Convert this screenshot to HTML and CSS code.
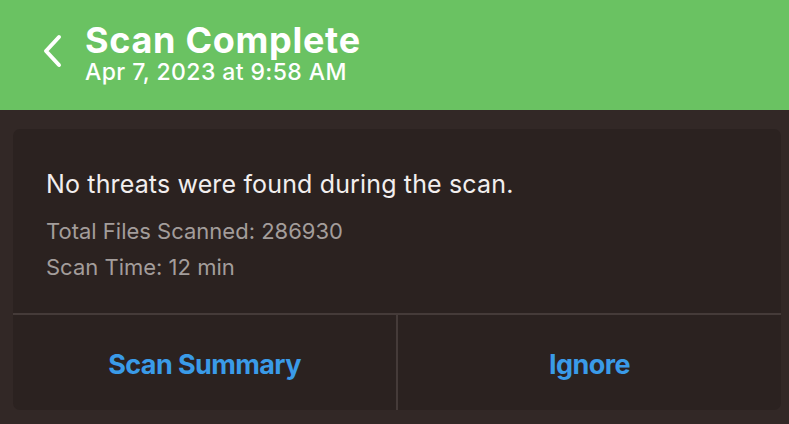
FILE: index.html
```html
<!DOCTYPE html>
<html lang="en">
<head>
  <meta charset="UTF-8">
  <meta name="viewport" content="width=device-width, initial-scale=1.0">
  <title>Scan Complete</title>
  <link rel="stylesheet" href="styles.css">
</head>
<body>
  <div id="header">
    <button id="back" aria-label="Back">
      <svg width="22" height="34" viewBox="0 0 22 34">
        <path d="M17 3 L4 17 L17 31" fill="none" stroke="#fff" stroke-width="4" stroke-linecap="round" stroke-linejoin="round"/>
      </svg>
    </button>
    <div class="titles">
      <div class="title">Scan Complete</div>
      <div class="subtitle">Apr 7, 2023 at 9:58 AM</div>
    </div>
  </div>

  <div id="card">
    <div class="info">
      <div class="message">No threats were found during the scan.</div>
      <div class="detail first">Total Files Scanned: 286930</div>
      <div class="detail">Scan Time: 12 min</div>
    </div>
    <div class="actions">
      <button class="action">Scan Summary</button>
      <button class="action">Ignore</button>
    </div>
  </div>
</body>
</html>
```

FILE: styles.css
```css
body {
  margin: 0;
  background-color: #322826;
  color: #fff;
  font-family: Inter, "Liberation Sans", sans-serif;
}
#header {
  height: 110px;
  background-color: #6ac262;
  display: flex;
  align-items: flex-start;
  box-sizing: border-box;
  padding: 21px 0 0 41px;
}
#back {
  background: none;
  border: none;
  padding: 0;
  margin-top: 13px;
  width: 24px;
  cursor: pointer;
}
.titles {
  margin-left: 20px;
}
.title {
  font-size: 36px;
  font-weight: 700;
  line-height: 38px;
  letter-spacing: 0.7px;
}
.subtitle {
  font-size: 23px;
  font-weight: 500;
  line-height: 26px;
  letter-spacing: 0.4px;
}
#card {
  margin: 19px 8px 0 13px;
  background-color: #2b2220;
  border-radius: 7px;
  overflow: hidden;
}
.info {
  box-sizing: border-box;
  height: 184px;
  padding: 38px 33px 0;
}
.message {
  font-size: 25px;
  line-height: 34px;
  color: #f2eeee;
  letter-spacing: 0.15px;
}
.detail {
  font-size: 22px;
  line-height: 36px;
  color: #a39d9b;
}
.detail.first {
  margin-top: 12px;
}
.actions {
  display: flex;
  border-top: 2px solid #453b39;
}
.action {
  flex: 1;
  height: 95px;
  padding: 4px 0 0;
  background: none;
  border: none;
  color: #3a9be8;
  font-family: inherit;
  font-size: 27px;
  font-weight: 700;
  letter-spacing: -0.6px;
  cursor: pointer;
}
.action + .action {
  border-left: 2px solid #453b39;
}
```
